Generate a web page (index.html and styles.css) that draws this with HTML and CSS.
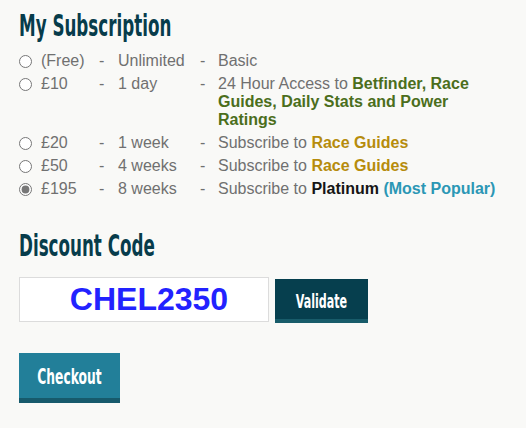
FILE: index.html
```html
<!DOCTYPE html>
<html lang="en">
<head>
  <meta charset="utf-8">
  <title>My Subscription</title>
  <link rel="stylesheet" href="styles.css">
</head>
<body>
<div class="page">
  <h2 class="title"><span class="narrow">My Subscription</span></h2>

  <div class="plans">
    <label class="plan">
      <input type="radio" name="plan">
      <span>(Free)</span><span>-</span><span>Unlimited</span><span>-</span>
      <span>Basic</span>
    </label>
    <label class="plan">
      <input type="radio" name="plan">
      <span>£10</span><span>-</span><span>1 day</span><span>-</span>
      <span>24 Hour Access to <b class="green">Betfinder, Race Guides, Daily Stats and Power Ratings</b></span>
    </label>
    <label class="plan">
      <input type="radio" name="plan">
      <span>£20</span><span>-</span><span>1 week</span><span>-</span>
      <span>Subscribe to <b class="gold">Race Guides</b></span>
    </label>
    <label class="plan">
      <input type="radio" name="plan">
      <span>£50</span><span>-</span><span>4 weeks</span><span>-</span>
      <span>Subscribe to <b class="gold">Race Guides</b></span>
    </label>
    <label class="plan">
      <input type="radio" name="plan" checked>
      <span>£195</span><span>-</span><span>8 weeks</span><span>-</span>
      <span>Subscribe to <b class="dark">Platinum</b> <b class="blue">(Most Popular)</b></span>
    </label>
  </div>

  <h2 class="title discount-title"><span class="narrow">Discount Code</span></h2>

  <div class="discount">
    <input class="code" type="text" value="CHEL2350">
    <button class="btn btn-dark"><span class="narrow">Validate</span></button>
  </div>

  <button class="btn btn-checkout"><span class="narrow">Checkout</span></button>
</div>
</body>
</html>
```

FILE: styles.css
```css
body {
    margin: 0;
    background-color: #f9f9f7;
    font-family: "Liberation Sans", Arial, sans-serif;
}

.page {
    padding: 0 19px;
}

/* no condensed display font here, so squeeze DejaVu */
.narrow {
    display: inline-block;
    transform: scaleX(0.65);
    transform-origin: left center;
    white-space: nowrap;
}

.title .narrow {
    transform: scaleX(0.62);
}

.btn .narrow {
    transform-origin: center center;
}

.title {
    margin: 0;
    padding-top: 8px;
    font-family: "DejaVu Sans Condensed", sans-serif;
    font-weight: bold;
    font-size: 30px;
    line-height: 36px;
    color: #073c4b;
}

.plans {
    margin-top: 8px;
    display: flex;
    flex-direction: column;
    gap: 5px;
    font-size: 16px;
    line-height: 18px;
    color: #707070;
}

.plan {
    display: grid;
    grid-template-columns: 22px 58px 19px 82px 18px 287px;
    align-items: start;
}

.plan input {
    margin: 3px 0 0;
    width: 13px;
    height: 13px;
    accent-color: #777;
}

.plan b {
    font-weight: bold;
}

.green { color: #4b6e1c; }
.gold { color: #b68c0c; }
.dark { color: #151515; }
.blue { color: #2b97b5; }

.discount-title {
    margin-top: 22px;
}

.discount {
    margin-top: 13px;
    display: flex;
    align-items: flex-start;
    gap: 6px;
}

.code {
    box-sizing: border-box;
    width: 250px;
    height: 45px;
    margin: 0;
    padding: 0 0 0 10px;
    border: 1px solid #dcdcdc;
    background-color: #fff;
    text-align: center;
    font-family: "Liberation Sans", Arial, sans-serif;
    font-weight: bold;
    font-size: 32px;
    color: #2222ff;
    outline: none;
}

.btn {
    border: none;
    color: #fff;
    font-family: "DejaVu Sans Condensed", sans-serif;
    font-weight: bold;
    cursor: pointer;
}

.btn-dark {
    margin-top: 2px;
    width: 93px;
    height: 44px;
    padding: 3px 0 0;
    background-color: #063f4e;
    border-bottom: 4px solid #185c6a;
    font-size: 19px;
}

.btn-checkout {
    margin-top: 30px;
    width: 101px;
    height: 50px;
    padding: 3px 0 0;
    background-color: #227f99;
    border-bottom: 5px solid #175a6c;
    font-size: 21px;
}
```
